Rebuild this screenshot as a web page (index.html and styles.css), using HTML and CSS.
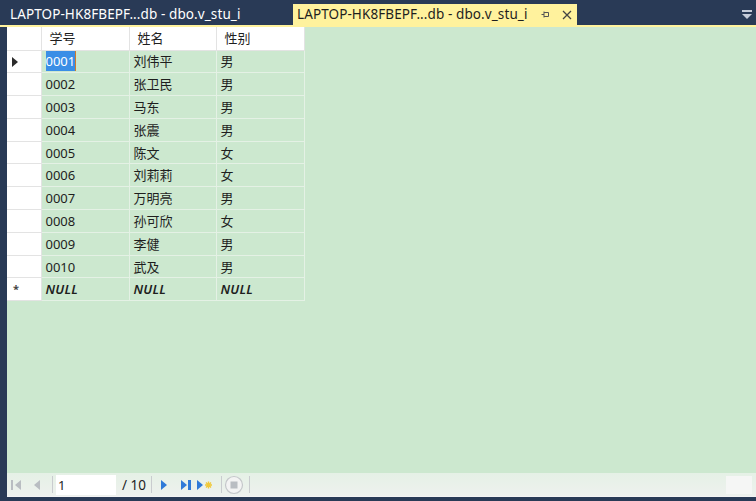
FILE: index.html
```html
<!DOCTYPE html>
<html lang="zh-CN">
<head>
    <meta charset="UTF-8">
    <title>dbo.v_stu_i</title>
    <link rel="stylesheet" href="styles.css">
</head>
<body>
    <div class="tab-strip">
        <div class="tab">LAPTOP-HK8FBEPF...db - dbo.v_stu_i</div>
        <div class="tab active">
            LAPTOP-HK8FBEPF...db - dbo.v_stu_i
            <span class="pin">
                <svg width="9" height="9" viewBox="0 0 9 9"><path d="M0.5 4.5h2.5M3 1.5v6M3 2.5h4.5v4h-4.5" fill="none" stroke="#555" stroke-width="1"/></svg>
            </span>
            <span class="close">
                <svg width="10" height="10" viewBox="0 0 10 10"><path d="M1 1l8 8M9 1l-8 8" stroke="#444" stroke-width="1.3"/></svg>
            </span>
        </div>
        <div class="tab-menu">
            <svg width="12" height="10" viewBox="0 0 12 10"><rect x="1" y="0" width="10" height="2" fill="#c5cbd8"/><path d="M1 4h10l-5 5z" fill="#c5cbd8"/></svg>
        </div>
    </div>

    <div class="panel">
        <table class="grid">
            <colgroup>
                <col style="width: 34px">
                <col style="width: 88px">
                <col style="width: 87px">
                <col style="width: 88px">
            </colgroup>
            <thead>
                <tr>
                    <th class="rh"></th>
                    <th>学号</th>
                    <th>姓名</th>
                    <th>性别</th>
                </tr>
            </thead>
            <tbody>
                <tr><td class="rh"><span class="arrow"></span></td><td><span class="sel">0001</span></td><td>刘伟平</td><td>男</td></tr>
                <tr><td class="rh"></td><td>0002</td><td>张卫民</td><td>男</td></tr>
                <tr><td class="rh"></td><td>0003</td><td>马东</td><td>男</td></tr>
                <tr><td class="rh"></td><td>0004</td><td>张震</td><td>男</td></tr>
                <tr><td class="rh"></td><td>0005</td><td>陈文</td><td>女</td></tr>
                <tr><td class="rh"></td><td>0006</td><td>刘莉莉</td><td>女</td></tr>
                <tr><td class="rh"></td><td>0007</td><td>万明亮</td><td>男</td></tr>
                <tr><td class="rh"></td><td>0008</td><td>孙可欣</td><td>女</td></tr>
                <tr><td class="rh"></td><td>0009</td><td>李健</td><td>男</td></tr>
                <tr><td class="rh"></td><td>0010</td><td>武及</td><td>男</td></tr>
                <tr class="new-row"><td class="rh">*</td><td>NULL</td><td>NULL</td><td>NULL</td></tr>
            </tbody>
        </table>

        <div class="nav-bar">
            <svg class="first" width="12" height="12" viewBox="0 0 12 12"><rect x="1" y="1" width="2" height="10" fill="#b9bdc2"/><path d="M11 1v10L5 6z" fill="#b9bdc2"/></svg>
            <svg class="prev" width="10" height="12" viewBox="0 0 10 12"><path d="M8 1v10L2 6z" fill="#b9bdc2"/></svg>
            <span class="sep s1"></span>
            <input class="page-box" type="text" value="1">
            <span class="count">/ 10</span>
            <span class="sep s2"></span>
            <svg class="next" width="10" height="12" viewBox="0 0 10 12"><path d="M2 1v10l6-5z" fill="#2f7ad8"/></svg>
            <svg class="last" width="14" height="12" viewBox="0 0 14 12"><path d="M1 1v10l6-5z" fill="#2f7ad8"/><rect x="8" y="1" width="3" height="10" fill="#2f7ad8"/></svg>
            <svg class="add" width="18" height="12" viewBox="0 0 18 12"><path d="M1 1v10l6-5z" fill="#2f7ad8"/><path d="M12.5 2.5v7M9 6h7M10 3.5l5 5M15 3.5l-5 5" stroke="#f0c93a" stroke-width="1.4"/></svg>
            <span class="sep s3"></span>
            <svg class="stop" width="20" height="20" viewBox="0 0 20 20"><circle cx="10" cy="10" r="8.5" fill="#f3f3f3" stroke="#c4c7ca" stroke-width="1.2"/><rect x="6.5" y="6.5" width="7" height="7" fill="#b9bdc2"/></svg>
            <span class="sep s4"></span>
            <span class="spacer"></span>
            <span class="dim-box"></span>
        </div>
    </div>
</body>
</html>
```

FILE: styles.css
```css
body {
    margin: 0;
    background-color: #293a56;
    font-family: "Noto Sans", "Noto Sans CJK SC", sans-serif;
    font-size: 13px;
    height: 501px;
    overflow: hidden;
}
.tab-strip {
    height: 25px;
    display: flex;
    align-items: flex-end;
    border-bottom: 2px solid #fff29d;
    padding-left: 5px;
}
.tab {
    box-sizing: border-box;
    height: 21px;
    line-height: 21px;
    padding: 0 0 0 5px;
    color: #ffffff;
    font-size: 13.5px;
    letter-spacing: 0.1px;
    width: 288px;
    white-space: nowrap;
}
.tab.active {
    background-color: #fff29d;
    color: #1e1e1e;
    width: 284px;
    padding: 0 0 0 4px;
    display: flex;
    align-items: center;
}
.pin {
    margin-left: 13px;
    display: flex;
}
.close {
    margin-left: 12px;
    display: flex;
}
.tab-menu {
    margin-left: auto;
    margin-right: 3px;
    align-self: center;
    display: flex;
    padding-top: 4px;
}
.panel {
    margin-left: 7px;
    height: 470px;
    background-color: #cce8cf;
    display: flex;
    flex-direction: column;
}
.grid {
    border-collapse: collapse;
    table-layout: fixed;
    width: 297px;
}
.grid th,
.grid td {
    box-sizing: border-box;
    height: 22.8px;
    padding: 0 0 0 4px;
    text-align: left;
    font-weight: normal;
    color: #1e1e1e;
    line-height: 16px;
    border: 1px solid #e4f1e5;
    white-space: nowrap;
}
.grid th {
    background-color: #ffffff;
    height: 23px;
    padding-left: 8px;
    border-color: #e3e3e3;
    border-top: none;
}
.grid th:first-child,
.grid td:first-child {
    border-left: none;
}
.grid .rh {
    background-color: #ffffff;
    border-color: #e3e3e3;
    padding: 0 0 0 5px;
    font-size: 11px;
}
.arrow {
    display: inline-block;
    width: 0;
    height: 0;
    border-top: 5px solid transparent;
    border-bottom: 5px solid transparent;
    border-left: 6px solid #2b2b2b;
    vertical-align: middle;
}
.sel {
    background-color: #3a8ee6;
    color: #ffffff;
    padding: 1px 0;
    border-right: 1px solid #d07a2c;
}
.new-row td {
    font-style: italic;
    font-weight: 600;
    letter-spacing: 0.2px;
}
.new-row td.rh {
    font-style: normal;
    font-weight: bold;
    padding-left: 6px;
    color: #444;
}
.nav-bar {
    margin-top: auto;
    height: 23px;
    display: flex;
    align-items: center;
    background: linear-gradient(#e5f1e6, #eef1ee);
    border-bottom: 1px solid #f4f4f4;
}
.first { margin-left: 3px; }
.prev { margin-left: 10px; }
.next { margin-left: 7px; }
.last { margin-left: 11px; }
.add { margin-left: 2px; }
.stop { margin-left: 2px; }
.sep {
    width: 1px;
    height: 17px;
    background-color: #c9cccf;
}
.s1 { margin-left: 10px; }
.s2 { margin-left: 5px; }
.s3 { margin-left: 7px; }
.s4 { margin-left: 5px; }
.page-box {
    width: 60px;
    height: 20px;
    box-sizing: border-box;
    border: none;
    margin: 0 0 0 3px;
    padding: 0 2px;
    font-family: "Noto Sans", sans-serif;
    font-size: 13px;
    color: #1e1e1e;
    background-color: #ffffff;
}
.count {
    margin-left: 6px;
    color: #1e1e1e;
    font-size: 13.5px;
}
.spacer {
    flex: 1;
}
.dim-box {
    width: 26px;
    height: 18px;
    background-color: #f5f6f5;
    margin-right: 4px;
}
```
